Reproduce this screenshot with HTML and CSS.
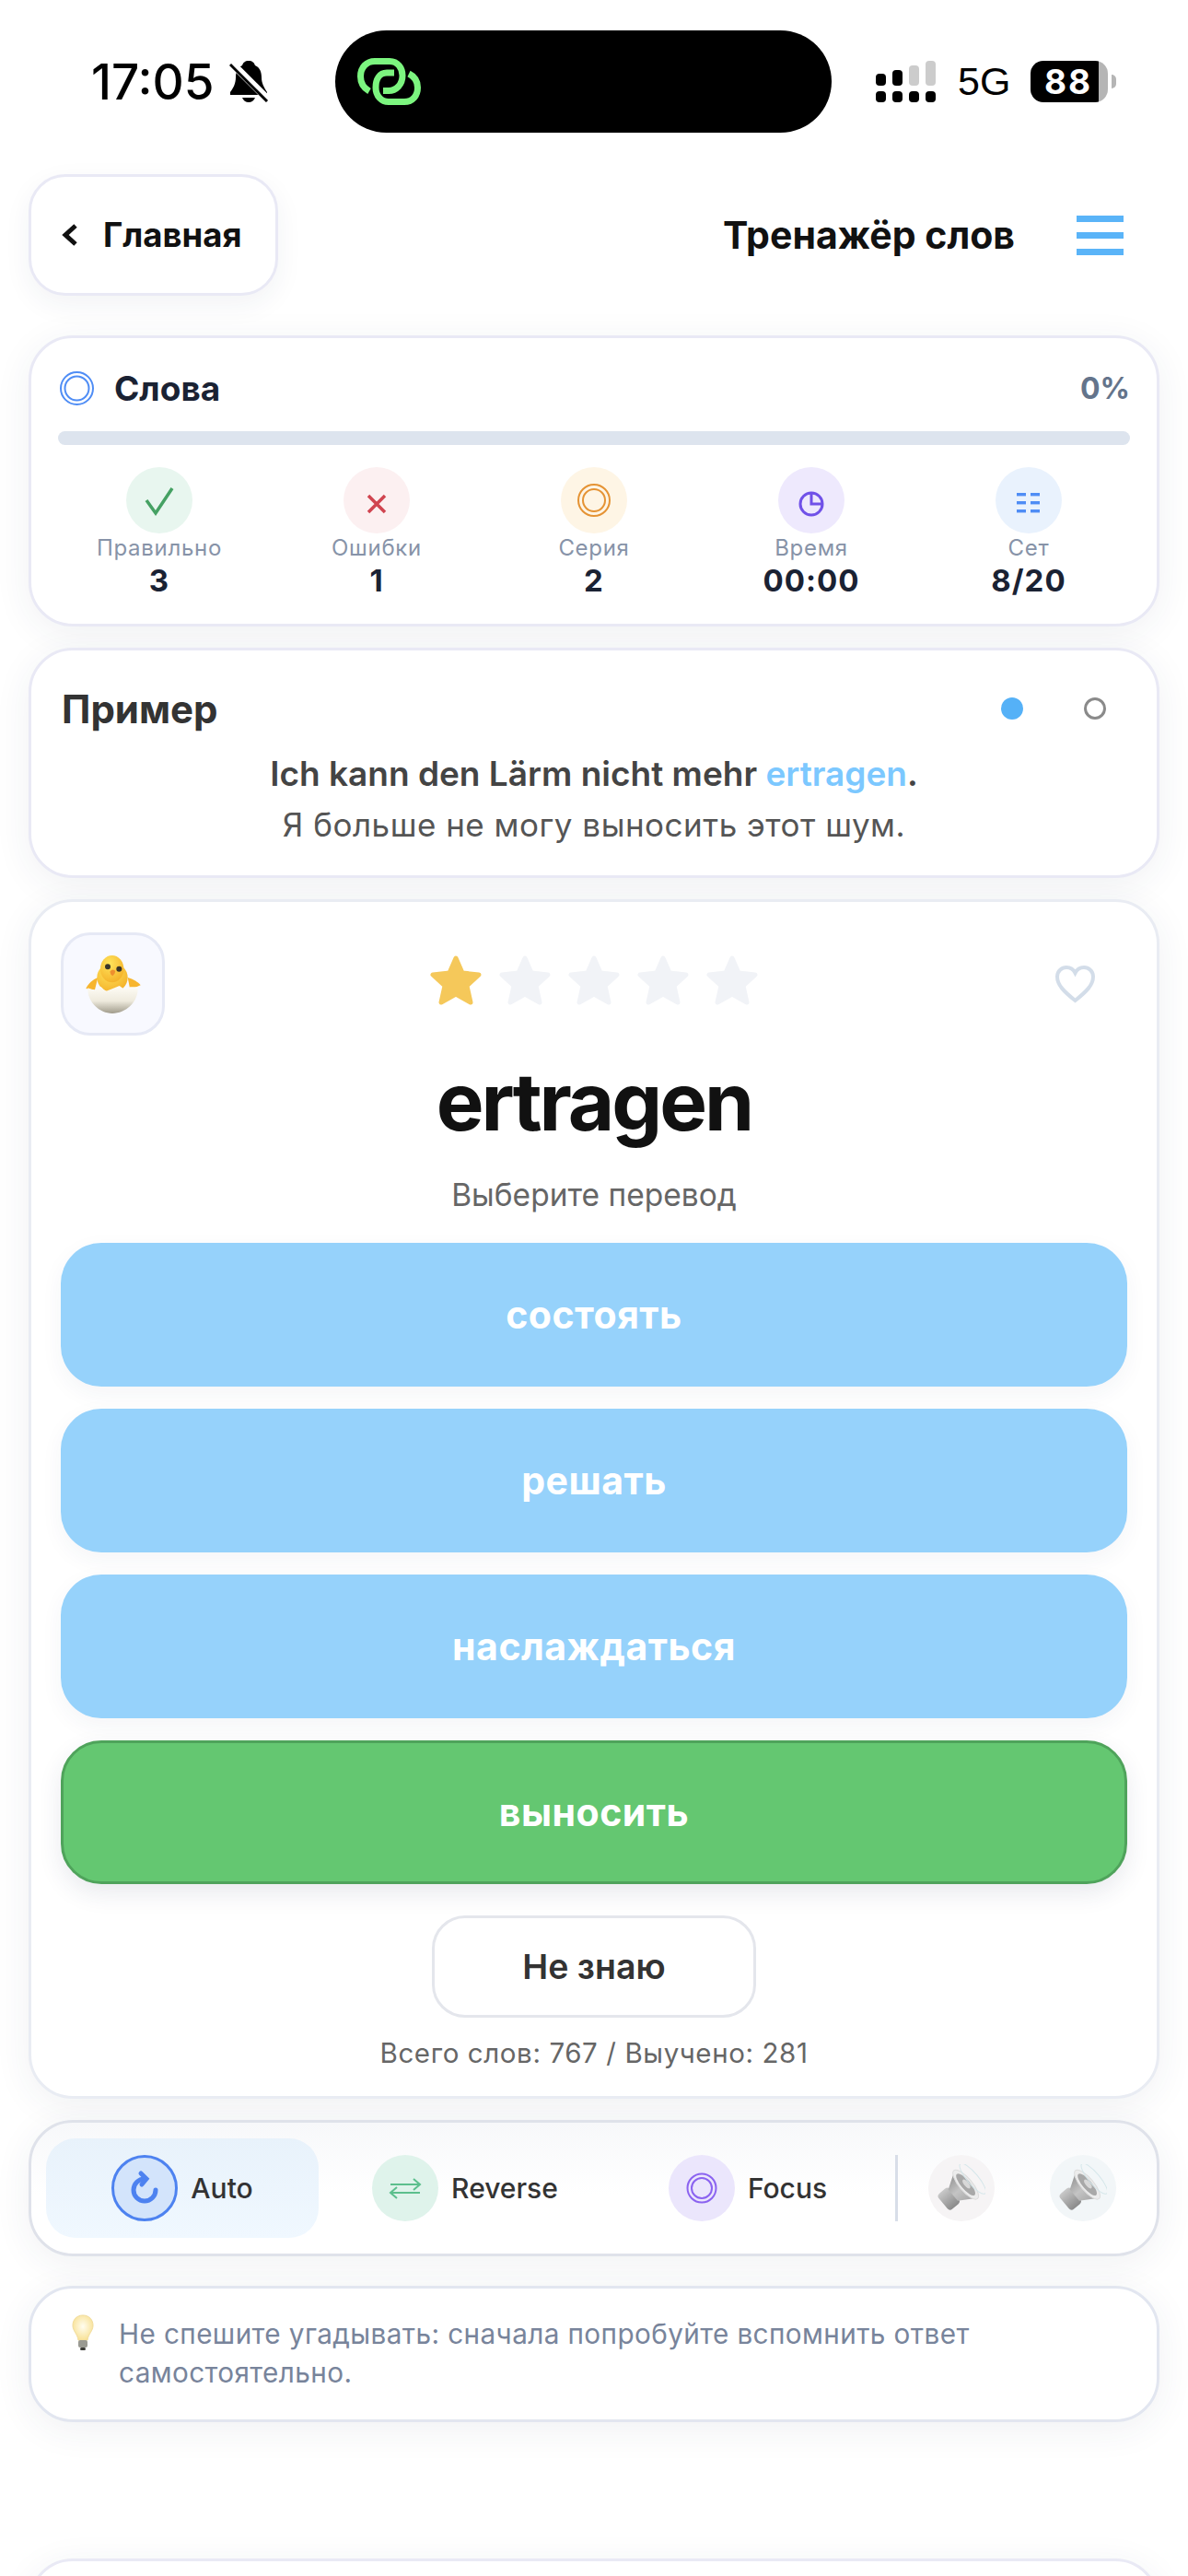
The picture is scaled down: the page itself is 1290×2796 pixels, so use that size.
FILE: index.html
```html
<!DOCTYPE html>
<html lang="ru">
    <head>
        <meta charset="UTF-8">
        <meta name="viewport" content="width=device-width, initial-scale=1.0">
        <title>Тренажёр слов</title>
        <link rel="stylesheet" href="styles.css">
    </head>
    <body>
        <svg class="defs" width="0" height="0">
            <defs>
                <linearGradient id="eggFill" x1="0" y1="0" x2="0" y2="1">
                    <stop offset="0" stop-color="#fffdf6"/>
                    <stop offset="0.55" stop-color="#eeeadd"/>
                    <stop offset="1" stop-color="#a09b8b"/>
                </linearGradient>
                <radialGradient id="chickFill" cx="0.4" cy="0.3" r="0.8">
                    <stop offset="0" stop-color="#ffe45c"/>
                    <stop offset="1" stop-color="#f3ad25"/>
                </radialGradient>
                <linearGradient id="coneFill" x1="0" y1="0" x2="0" y2="1">
                    <stop offset="0" stop-color="#8f8f8f"/>
                    <stop offset="0.5" stop-color="#c4c4c4"/>
                    <stop offset="1" stop-color="#a3a3a3"/>
                </linearGradient>
                <linearGradient id="magnetFill" x1="0" y1="0" x2="0" y2="1">
                    <stop offset="0" stop-color="#c9c9c9"/>
                    <stop offset="1" stop-color="#8a8a8a"/>
                </linearGradient>
                <radialGradient id="bulbFill" cx="0.5" cy="0.45" r="0.6">
                    <stop offset="0" stop-color="#fffdf0"/>
                    <stop offset="1" stop-color="#f8df8e"/>
                </radialGradient>
                <symbol id="star" viewBox="0 0 58 54">
                    <polygon points="29,3 36,19 54,21 41,33 45,51 29,42 13,51 17,33 4,21 22,19" fill="currentColor" stroke="currentColor" stroke-width="5" stroke-linejoin="round"/>
                </symbol>
                <symbol id="speaker" viewBox="0 0 52 52">
                    <g transform="rotate(-40 26 26)">
                        <rect x="0" y="15" width="16" height="22" rx="4" fill="url(#magnetFill)"/>
                        <path d="M14 18 L32 7 L32 45 L14 34 Z" fill="url(#coneFill)"/>
                        <ellipse cx="32" cy="26" rx="7" ry="20" fill="#ececec" stroke="#dcdcdc" stroke-width="1"/>
                        <ellipse cx="32" cy="26" rx="5" ry="15" fill="#a8a8a8"/>
                        <ellipse cx="33" cy="26" rx="2.5" ry="6" fill="#d8d8d8"/>
                        <ellipse cx="42" cy="26" rx="6" ry="21" fill="none" stroke="#d5e6ea" stroke-width="1"/>
                    </g>
                </symbol>
            </defs>
        </svg>

        <div class="page">
            <div class="statusbar">
                <span class="time">17:05</span>
                <svg class="bell" width="43" height="45" viewBox="0 0 43 45">
                    <path d="M21 0 C25 0 27 2 28 5 C33 7 35 12 35 18 C35 25 38 29 41 34 L41 37 H1 L1 34 C4 30 7 25 7 18 C7 12 9 7 14 5 C15 2 17 0 21 0 Z" fill="#000"/>
                    <path d="M14 40 H28 C27 43 24 45 21 45 C18 45 15 43 14 40 Z" fill="#000"/>
                    <line x1="1" y1="1" x2="43" y2="43" stroke="#fff" stroke-width="8"/>
                    <line x1="1" y1="4" x2="41" y2="44" stroke="#000" stroke-width="3"/>
                </svg>
                <div class="island">
                    <svg width="69" height="51" viewBox="0 0 69 51" fill="none" stroke="#7cf57f" stroke-width="7">
                        <path d="M13 36 C6 32 3.5 26 3.5 20 C3.5 10 10 3.5 19 3.5 H35 C44 3.5 49 11 49 19 C49 29 42 35.5 34 35.5 H28"/>
                        <path d="M40 16 H32 C24 16 20 23 20 32 C20 41 26 47.5 34 47.5 H51 C60 47.5 65.5 41 65.5 32 C65.5 25 62 20 56 17"/>
                    </svg>
                </div>
                <svg class="signal" width="66" height="45" viewBox="0 0 66 45">
                    <rect x="1" y="14" width="11" height="13" rx="4" fill="#000"/>
                    <rect x="19" y="10" width="11" height="17" rx="4" fill="#000"/>
                    <rect x="37" y="5" width="11" height="22" rx="4" fill="#ccc"/>
                    <rect x="55" y="0" width="11" height="27" rx="4" fill="#ccc"/>
                    <rect x="1" y="33" width="11" height="12" rx="4" fill="#000"/>
                    <rect x="19" y="33" width="11" height="12" rx="4" fill="#000"/>
                    <rect x="37" y="33" width="11" height="12" rx="4" fill="#000"/>
                    <rect x="55" y="33" width="11" height="12" rx="4" fill="#000"/>
                </svg>
                <span class="network">5G</span>
                <div class="battery"><span>88</span></div>
                <div class="battery-cap"></div>
            </div>

            <div class="topbar">
                <div class="back-btn">
                    <svg width="20" height="26" viewBox="0 0 20 26" fill="none" stroke="#111" stroke-width="5">
                        <path d="M16 3 L5 13 L16 23"/>
                    </svg>
                    <span>Главная</span>
                </div>
                <div class="page-title">Тренажёр слов</div>
                <div class="burger"><span></span><span></span><span></span></div>
            </div>

            <div class="card progress-card">
                <div class="progress-head">
                    <svg width="37" height="37" viewBox="0 0 37 37" fill="none" stroke="#4f8df5" stroke-width="2">
                        <circle cx="18.5" cy="18.5" r="17.5"/>
                        <circle cx="18.5" cy="18.5" r="13"/>
                    </svg>
                    <span class="progress-title">Слова</span>
                    <span class="progress-pct">0%</span>
                </div>
                <div class="progress-track"></div>
                <div class="stats">
                    <div class="stat">
                        <div class="round bg-green">
                            <svg width="72" height="72" viewBox="0 0 72 72" fill="none" stroke="#45a163" stroke-width="3.5">
                                <path d="M22 36 L32 50 L50 23"/>
                            </svg>
                        </div>
                        <div class="stat-label">Правильно</div>
                        <div class="stat-value">3</div>
                    </div>
                    <div class="stat">
                        <div class="round bg-red">
                            <svg width="72" height="72" viewBox="0 0 72 72" fill="none" stroke="#d0444f" stroke-width="3.5">
                                <path d="M27 31 L45 49 M45 31 L27 49"/>
                            </svg>
                        </div>
                        <div class="stat-label">Ошибки</div>
                        <div class="stat-value">1</div>
                    </div>
                    <div class="stat">
                        <div class="round bg-orange">
                            <svg width="72" height="72" viewBox="0 0 72 72" fill="none" stroke="#e59334" stroke-width="2">
                                <circle cx="36" cy="36" r="17"/>
                                <circle cx="36" cy="36" r="12"/>
                            </svg>
                        </div>
                        <div class="stat-label">Серия</div>
                        <div class="stat-value">2</div>
                    </div>
                    <div class="stat">
                        <div class="round bg-purple">
                            <svg width="72" height="72" viewBox="0 0 72 72" fill="none" stroke="#7051e8" stroke-width="3">
                                <circle cx="36" cy="40" r="12"/>
                                <path d="M36 28 V40 H48"/>
                            </svg>
                        </div>
                        <div class="stat-label">Время</div>
                        <div class="stat-value">00:00</div>
                    </div>
                    <div class="stat">
                        <div class="round bg-blue">
                            <svg width="72" height="72" viewBox="0 0 72 72" fill="#4f8df5">
                                <rect x="23" y="28" width="10" height="3.4"/>
                                <rect x="38" y="28" width="10" height="3.4"/>
                                <rect x="23" y="37" width="10" height="3.4"/>
                                <rect x="38" y="37" width="10" height="3.4"/>
                                <rect x="23" y="46" width="10" height="3.4"/>
                                <rect x="38" y="46" width="10" height="3.4"/>
                            </svg>
                        </div>
                        <div class="stat-label">Сет</div>
                        <div class="stat-value">8/20</div>
                    </div>
                </div>
            </div>

            <div class="card example-card">
                <div class="example-head">
                    <span class="example-title">Пример</span>
                    <div class="dots">
                        <span class="dot dot-on"></span>
                        <span class="dot dot-off"></span>
                    </div>
                </div>
                <div class="example-de">Ich kann den Lärm nicht mehr <span class="hl">ertragen</span>.</div>
                <div class="example-ru">Я больше не могу выносить этот шум.</div>
            </div>

            <div class="card word-card">
                <div class="word-top">
                    <div class="emoji-box">
                        <svg width="60" height="63" viewBox="95 93 180 189">
                            <path d="M135 165 C118 172 103 185 96 201 L125 205 Z" fill="#f7b52e"/>
                            <path d="M232 165 C250 170 266 180 274 190 L240 205 Z" fill="#f7b52e"/>
                            <ellipse cx="182" cy="165" rx="50" ry="48" fill="url(#chickFill)"/>
                            <ellipse cx="181" cy="137" rx="38" ry="44" fill="url(#chickFill)"/>
                            <circle cx="167" cy="130" r="9" fill="#3a352a"/>
                            <circle cx="204" cy="137" r="9" fill="#3a352a"/>
                            <path d="M174 146 Q183 134 192 144 Q190 156 183 160 Q176 156 174 146 Z" fill="#ee8f2e"/>
                            <path d="M102 199 L125 208 L145 195 L160 210 L185 200 L205 192 L222 204 L240 196 L265 196 C268 245 225 282 182 282 C140 282 100 245 102 199 Z" fill="url(#eggFill)"/>
                        </svg>
                    </div>
                    <div class="stars">
                        <svg class="star star-on"><use href="#star"/></svg>
                        <svg class="star"><use href="#star"/></svg>
                        <svg class="star"><use href="#star"/></svg>
                        <svg class="star"><use href="#star"/></svg>
                        <svg class="star"><use href="#star"/></svg>
                    </div>
                    <svg class="heart" width="45" height="43" viewBox="0 0 45 43" fill="none" stroke="#d3dde9" stroke-width="4">
                        <path d="M22.5 39 C10 29 3 22 3 13 C3 7 8 3 13 3 C17 3 20.5 5 22.5 9 C24.5 5 28 3 32 3 C37 3 42 7 42 13 C42 22 35 29 22.5 39 Z"/>
                    </svg>
                </div>
                <div class="word">ertragen</div>
                <div class="word-hint">Выберите перевод</div>
                <div class="answers">
                    <div class="answer">состоять</div>
                    <div class="answer">решать</div>
                    <div class="answer">наслаждаться</div>
                    <div class="answer answer-right">выносить</div>
                </div>
                <div class="dontknow">Не знаю</div>
                <div class="totals">Всего слов: 767 / Выучено: 281</div>
            </div>

            <div class="card modes">
                <div class="mode mode-active">
                    <div class="round round-auto">
                        <svg width="40" height="40" viewBox="0 0 40 40" fill="none" stroke="#4d82f0" stroke-width="5" stroke-linecap="round">
                            <path d="M32 22 A12 12 0 1 1 20 10"/>
                            <path d="M16 4 L22 10 L17 16"/>
                        </svg>
                    </div>
                    <span>Auto</span>
                </div>
                <div class="mode">
                    <div class="round bg-mint">
                        <svg width="72" height="72" viewBox="0 0 72 72" fill="none" stroke="#5cbf8d" stroke-width="2">
                            <path d="M20 32 H52 M45 26 L52 32 L45 38"/>
                            <path d="M52 41 H20 M27 35 L20 41 L27 47"/>
                        </svg>
                    </div>
                    <span>Reverse</span>
                </div>
                <div class="mode">
                    <div class="round bg-lilac">
                        <svg width="72" height="72" viewBox="0 0 72 72" fill="none" stroke="#8b63f0" stroke-width="2">
                            <circle cx="36" cy="36" r="15.5"/>
                            <circle cx="36" cy="36" r="11"/>
                        </svg>
                    </div>
                    <span>Focus</span>
                </div>
                <div class="mode-divider"></div>
                <div class="round bg-sound1"><svg class="speaker"><use href="#speaker"/></svg></div>
                <div class="round bg-sound2"><svg class="speaker"><use href="#speaker"/></svg></div>
            </div>

            <div class="card tip">
                <svg class="bulb" width="24" height="40" viewBox="0 0 24 40">
                    <path d="M12 1 C19 1 23 6 23 12 C23 18 18 21 17 28 H7 C6 21 1 18 1 12 C1 6 5 1 12 1 Z" fill="url(#bulbFill)" stroke="#f1dc9c" stroke-width="1"/>
                    <rect x="7" y="28" width="10" height="8" rx="2" fill="#9a9a92"/>
                    <rect x="9" y="36" width="6" height="3" rx="1.5" fill="#3c3c38"/>
                </svg>
                <p class="tip-text">Не спешите угадывать: сначала попробуйте вспомнить ответ самостоятельно.</p>
            </div>

            <div class="card next-card"></div>
        </div>
    </body>
</html>
```

FILE: styles.css
```css
html, body {
    margin: 0;
    padding: 0;
    background-color: #fff;
}
body {
    font-family: Inter, "Noto Sans", sans-serif;
    color: #111;
}
.defs {
    position: absolute;
}
.page {
    width: 1290px;
    height: 2796px;
    overflow: hidden;
}

/* status bar */
.statusbar {
    display: flex;
    align-items: center;
    height: 111px;
    padding: 33px 0 0 99px;
    margin-bottom: 45px;
}
.time {
    font-size: 53px;
    font-weight: 500;
    width: 150px;
    color: #000;
}
.island {
    display: flex;
    align-items: center;
    width: 539px;
    height: 111px;
    margin-left: 72px;
    margin-right: 47px;
    padding-left: 24px;
    box-sizing: border-box;
    background-color: #000;
    border-radius: 56px;
}
.network {
    font-family: "Liberation Sans", sans-serif;
    font-size: 43px;
    margin-left: 24px;
    width: 79px;
    color: #000;
}
.battery {
    width: 84px;
    height: 45px;
    border-radius: 14px;
    background: linear-gradient(to right, #000 88%, #b5b5b5 88%);
    display: flex;
    align-items: center;
    padding-left: 15px;
    box-sizing: border-box;
}
.battery span {
    color: #fff;
    font-size: 37px;
    font-weight: 700;
    letter-spacing: 2px;
}
.battery-cap {
    width: 5px;
    height: 15px;
    margin-left: 4px;
    background-color: #b5b5b5;
    border-radius: 0 8px 8px 0;
}

/* top bar */
.topbar {
    display: flex;
    align-items: center;
    padding: 0 70px 0 31px;
    margin-bottom: 43px;
}
.back-btn {
    display: flex;
    align-items: center;
    gap: 26px;
    width: 271px;
    height: 132px;
    box-sizing: border-box;
    padding-left: 32px;
    background-color: #fff;
    border: 3px solid #e9e9f5;
    border-radius: 40px;
    box-shadow: 0 10px 30px rgba(40, 50, 90, 0.06);
    font-size: 36.5px;
    font-weight: 700;
}
.page-title {
    margin-left: auto;
    margin-right: 67px;
    font-size: 41px;
    font-weight: 700;
}
.burger {
    display: flex;
    flex-direction: column;
    gap: 11px;
    width: 51px;
}
.burger span {
    height: 7px;
    background-color: #5ab4f8;
}

/* cards */
.card {
    width: 1228px;
    margin: 0 0 23px 31px;
    box-sizing: border-box;
    background-color: #fff;
    border: 3px solid #e9e9f5;
    border-radius: 48px;
    box-shadow: 0 8px 40px rgba(40, 50, 90, 0.07);
}
.round {
    display: flex;
    align-items: center;
    justify-content: center;
    flex-shrink: 0;
    width: 72px;
    height: 72px;
    box-sizing: border-box;
    border-radius: 50%;
}
.bg-green { background-color: #e8f6ef; }
.bg-red { background-color: #fcf0f1; }
.bg-orange { background-color: #fef5e5; }
.bg-purple { background-color: #eee9fd; }
.bg-blue { background-color: #e9f2fd; }
.bg-mint { background-color: #dff3eb; }
.bg-lilac { background-color: #ebe6fc; }
.bg-sound1 { background-color: #f6f4f5; }
.bg-sound2 { background-color: #f2f6f8; }

/* progress card */
.progress-card {
    height: 316px;
    padding: 36px 29px 0;
}
.progress-head {
    display: flex;
    align-items: center;
    height: 37px;
    padding-left: 2px;
}
.progress-title {
    margin-left: 22px;
    font-size: 37px;
    font-weight: 700;
    color: #1a2233;
}
.progress-pct {
    margin-left: auto;
    font-size: 32px;
    font-weight: 700;
    color: #64748b;
}
.progress-track {
    height: 15px;
    margin-top: 28px;
    background-color: #dde4ee;
    border-radius: 8px;
}
.stats {
    display: grid;
    grid-template-columns: repeat(5, 236px);
    margin: 24px -8px 0;
}
.stat {
    display: flex;
    flex-direction: column;
    align-items: center;
}
.stat-label {
    height: 30px;
    margin-top: 1px;
    line-height: 30px;
    font-size: 24px;
    letter-spacing: 0.7px;
    color: #8793a8;
}
.stat-value {
    line-height: 40px;
    font-size: 33px;
    font-weight: 700;
    letter-spacing: 1px;
    color: #1a2233;
}

/* example card */
.example-card {
    height: 250px;
    padding: 38px 0 0 33px;
}
.example-head {
    display: flex;
    align-items: center;
    justify-content: space-between;
    height: 50px;
}
.example-title {
    font-size: 42px;
    font-weight: 700;
    color: #333;
}
.dots {
    display: flex;
    gap: 66px;
    margin-right: 55px;
}
.dot {
    width: 24px;
    height: 24px;
    box-sizing: border-box;
    border-radius: 50%;
}
.dot-on {
    background-color: #55b1f7;
}
.dot-off {
    border: 3px solid #8a8a8a;
}
.example-de, .example-ru {
    margin-left: -33px;
    line-height: 44px;
    text-align: center;
}
.example-de {
    margin-top: 24px;
    font-size: 37px;
    font-weight: 600;
    color: #444;
}
.example-ru {
    margin-top: 11px;
    font-size: 35px;
    letter-spacing: 0.5px;
    color: #555;
}
.hl {
    color: #7cc8ff;
}

/* word card */
.word-card {
    height: 1302px;
    padding: 33px 32px 0;
    border-color: #e9ecf3;
}
.word-top {
    display: grid;
    grid-template-columns: 113px 1fr 113px;
    align-items: center;
}
.emoji-box {
    display: flex;
    align-items: center;
    justify-content: center;
    width: 113px;
    height: 112px;
    box-sizing: border-box;
    background-color: #f8f9ff;
    border: 3px solid #e6e9f5;
    border-radius: 32px;
}
.stars {
    display: flex;
    justify-content: center;
    gap: 17px;
    margin-bottom: 8px;
}
.star {
    width: 58px;
    height: 54px;
    color: #f1f3f7;
}
.star-on {
    color: #f5c85a;
}
.heart {
    justify-self: end;
    margin-right: 34px;
}
.word {
    margin-top: 20px;
    height: 104px;
    line-height: 104px;
    text-align: center;
    font-size: 87px;
    font-weight: 700;
    letter-spacing: -3px;
    color: #111;
}
.word-hint {
    margin-top: 29px;
    line-height: 40px;
    text-align: center;
    font-size: 33.5px;
    color: #666;
}
.answers {
    display: flex;
    flex-direction: column;
    gap: 24px;
    margin-top: 32px;
}
.answer {
    display: flex;
    align-items: center;
    justify-content: center;
    height: 156px;
    box-sizing: border-box;
    background-color: #96d2fb;
    border-radius: 44px;
    box-shadow: 0 8px 24px rgba(40, 50, 90, 0.05);
    font-size: 41px;
    font-weight: 700;
    letter-spacing: 0.5px;
    color: #fff;
}
.answer-right {
    background-color: #64c771;
    border: 3px solid #4fa35b;
    box-shadow: 0 10px 26px rgba(40, 50, 90, 0.1);
}
.dontknow {
    display: flex;
    align-items: center;
    justify-content: center;
    width: 352px;
    height: 111px;
    box-sizing: border-box;
    margin: 34px auto 0;
    border: 3px solid #e4e6ec;
    border-radius: 36px;
    font-size: 37.5px;
    font-weight: 600;
    color: #333;
}
.totals {
    margin-top: 20px;
    line-height: 36px;
    text-align: center;
    font-size: 29.5px;
    letter-spacing: 0.6px;
    color: #666;
}

/* mode toolbar */
.modes {
    display: flex;
    align-items: center;
    height: 148px;
    padding: 0 44px 0 16px;
    margin-bottom: 32px;
    border-color: #dfe2ea;
    background: linear-gradient(to bottom, #f7f8fa, #fff 55%);
}
.mode {
    display: flex;
    align-items: center;
    justify-content: center;
    gap: 14px;
    width: 296px;
    height: 108px;
    margin-right: 11px;
    border-radius: 32px;
    font-size: 30px;
    font-weight: 500;
    color: #333;
}
.mode-active {
    background: linear-gradient(to bottom, #e8f2fb, #f0f8ff);
}
.round-auto {
    background-color: #d3e4fb;
    border: 3px solid #4d82f0;
}
.mode-divider {
    width: 3px;
    height: 72px;
    margin: 0 33px 0 1px;
    background-color: #d8dee8;
}
.modes > .round + .round {
    margin-left: 60px;
}
.speaker {
    width: 52px;
    height: 52px;
}

/* tip */
.tip {
    display: flex;
    align-items: flex-start;
    gap: 27px;
    height: 148px;
    padding: 28px 40px 0 44px;
    margin-bottom: 148px;
    border-color: #e2e6f0;
}
.bulb {
    flex-shrink: 0;
}
.tip-text {
    margin: 0;
    line-height: 42px;
    font-size: 29.7px;
    letter-spacing: 0.4px;
    color: #78849b;
}
.next-card {
    height: 120px;
    margin-bottom: 0;
}
```
